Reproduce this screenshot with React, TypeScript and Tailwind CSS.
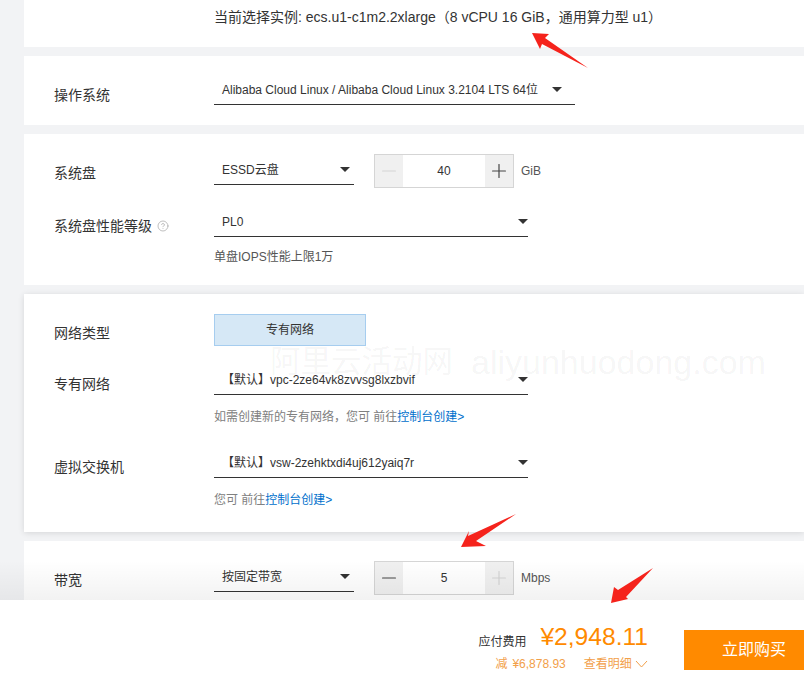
import React from "react";
import { CircleHelp, Minus, Plus } from "lucide-react";

function Panel({ children, className = "" }: { children: React.ReactNode; className?: string }) {
  return <section className={`ml-[24px] bg-white pl-[30px] ${className}`}>{children}</section>;
}

function Row({ label, children, labelClass = "mt-[4px]" }: { label: React.ReactNode; children: React.ReactNode; labelClass?: string }) {
  return (
    <div className="flex items-start">
      <div className={`w-[160px] shrink-0 h-[30px] -mb-[10px] flex items-center gap-[5px] text-[14px] text-[#333] ${labelClass}`}>{label}</div>
      {children}
    </div>
  );
}

/** Underlined dropdown, the caret sits `caretClass` from the right edge. */
function Select({ value, widthClass, caretClass = "pr-0" }: { value: string; widthClass: string; caretClass?: string }) {
  return (
    <div className={`h-[30px] border-b border-[#333] pl-[8px] flex items-center justify-between text-[12px] text-[#333] ${widthClass} ${caretClass}`}>
      <span>{value}</span>
      <span className="w-0 h-0 border-x-[5px] border-x-transparent border-t-[5px] border-t-[#333]" />
    </div>
  );
}

function Stepper({ value, unit, minusOff, plusOff }: { value: string; unit: string; minusOff?: boolean; plusOff?: boolean }) {
  return (
    <div className="flex items-center ml-[20px] -mt-[1px] h-[34px]">
      <div className="w-[140px] h-[34px] border border-[#d5d5d5] flex items-center text-[12px] text-[#333]">
        <div className={`w-[28px] h-full bg-[#f0f0f0] flex items-center justify-center ${minusOff ? "text-[#d4d4d4]" : "text-[#444]"}`}>
          <Minus size={22} strokeWidth={1.3} />
        </div>
        <div className="flex-1 text-center">{value}</div>
        <div className={`w-[28px] h-full bg-[#f0f0f0] flex items-center justify-center ${plusOff ? "text-[#d4d4d4]" : "text-[#444]"}`}>
          <Plus size={22} strokeWidth={1.3} />
        </div>
      </div>
      <span className="ml-[7px] text-[12px] text-[#555]">{unit}</span>
    </div>
  );
}

function Helper({ text, link, className = "" }: { text: string; link: string; className?: string }) {
  return (
    <div className={`ml-[160px] h-[20px] leading-[20px] text-[12px] text-[#808080] ${className}`}>
      {text}
      <span className="text-[#0070cc]">{link}</span>
    </div>
  );
}

function Arrows() {
  return (
    <svg className="absolute inset-0 pointer-events-none" width="804" height="679" viewBox="0 0 804 679">
      <polygon points="532,33 549,34 545,38 588,68 542,44 540,49" fill="#f5231c" />
      <polygon points="461,547 469,531 468,536 516,514 476,541 486,546" fill="#f5231c" />
      <polygon points="611,603 614,587 618,590 653,568 626,597 628,599" fill="#f5231c" />
    </svg>
  );
}

export default function App() {
  return (
    <div
      className="relative w-[804px] h-[679px] overflow-hidden bg-[#f2f3f5] flex flex-col"
      style={{ fontFamily: '"Liberation Sans", "Noto Sans CJK SC", sans-serif' }}
    >
      <main className="h-[600px] flex flex-col gap-[9px]">
        <Panel className="h-[47px] shrink-0">
          <div className="ml-[160px] h-[34px] flex items-center text-[14px] text-[#333]">
            当前选择实例: ecs.u1-c1m2.2xlarge（8 vCPU 16 GiB，通用算力型 u1）
          </div>
        </Panel>

        <Panel className="h-[69px] shrink-0 pt-[19px]">
          <Row label="操作系统" labelClass="mt-[5px]">
            <Select value="Alibaba Cloud Linux / Alibaba Cloud Linux 3.2104 LTS 64位" widthClass="w-[361px]" caretClass="pr-[13px]" />
          </Row>
        </Panel>

        <Panel className="h-[151px] shrink-0 pt-[21px]">
          <Row label="系统盘" labelClass="mt-[3px]">
            <Select value="ESSD云盘" widthClass="w-[140px]" caretClass="pr-[4px]" />
            <Stepper value="40" unit="GiB" minusOff />
          </Row>
          <div className="mt-[19px]">
            <Row
              label={
                <>
                  系统盘性能等级
                  <CircleHelp size={12} strokeWidth={1.5} className="text-[#aaa]" />
                </>
              }
            >
              <Select value="PL0" widthClass="w-[314px]" />
            </Row>
          </div>
          <div className="ml-[160px] mt-[10px] h-[20px] leading-[20px] text-[12px] text-[#555]">单盘IOPS性能上限1万</div>
        </Panel>

        <Panel className="h-[238px] shrink-0 pt-[20px] shadow-[0_1px_6px_rgba(0,0,0,0.12)]">
          <Row label="网络类型" labelClass="mt-[4px]">
            <div className="w-[152px] h-[32px] bg-[#d6e8f6] border border-[#a6cdef] flex items-center justify-center text-[12px] text-[#333]">专有网络</div>
          </Row>
          <div className="mt-[19px]">
            <Row label="专有网络">
              <Select value="【默认】vpc-2ze64vk8zvvsg8lxzbvif" widthClass="w-[314px]" />
            </Row>
          </div>
          <Helper text="如需创建新的专有网络，您可 前往" link="控制台创建>" className="mt-[12px]" />
          <div className="mt-[21px]">
            <Row label="虚拟交换机">
              <Select value="【默认】vsw-2zehktxdi4uj612yaiq7r" widthClass="w-[314px]" />
            </Row>
          </div>
          <Helper text="您可 前往" link="控制台创建>" className="mt-[12px]" />
        </Panel>

        <Panel className="flex-1 pt-[21px]">
          <Row label="带宽" labelClass="mt-[3px]">
            <Select value="按固定带宽" widthClass="w-[140px]" caretClass="pr-[4px]" />
            <Stepper value="5" unit="Mbps" plusOff />
          </Row>
        </Panel>
      </main>

      {/* fade above the fixed footer */}
      <div className="absolute left-0 right-0 top-[560px] h-[40px] bg-gradient-to-b from-transparent to-black/[0.05] pointer-events-none" />

      <footer className="h-[79px] shrink-0 bg-white flex items-start justify-end">
        <div className="mr-[36px] mt-[22px]">
          <div className="flex items-center">
            <span className="text-[12px] text-[#333] mt-[10px]">应付费用</span>
            <span className="ml-[14px] text-[24.6px] leading-[30px] text-[#ff8a00]">¥2,948.11</span>
          </div>
          <div className="flex items-center mt-[3px] text-[12px] text-[#f2a04a]">
            <span className="ml-[17px]">减</span>
            <span className="ml-[5px]">¥6,878.93</span>
            <span className="ml-[18px]">查看明细</span>
            <svg className="ml-[3px]" width="13" height="8" viewBox="0 0 13 8" fill="none" stroke="#f2a04a" strokeWidth="1">
              <path d="M1 1 L6.5 7 L12 1" />
            </svg>
          </div>
        </div>
        <div className="mt-[30px] w-[120px] h-[40px] bg-[#ff8a00] text-white text-[16px] flex items-center justify-center pl-[20px]">立即购买</div>
      </footer>

      <div className="absolute left-[270px] top-[345px] h-[34px] flex items-center text-black/[0.05] whitespace-nowrap pointer-events-none">
        <span className="text-[30.5px]">阿里云活动网</span>
        <span className="ml-[18px] text-[34px]">aliyunhuodong.com</span>
      </div>
      <Arrows />
    </div>
  );
}
